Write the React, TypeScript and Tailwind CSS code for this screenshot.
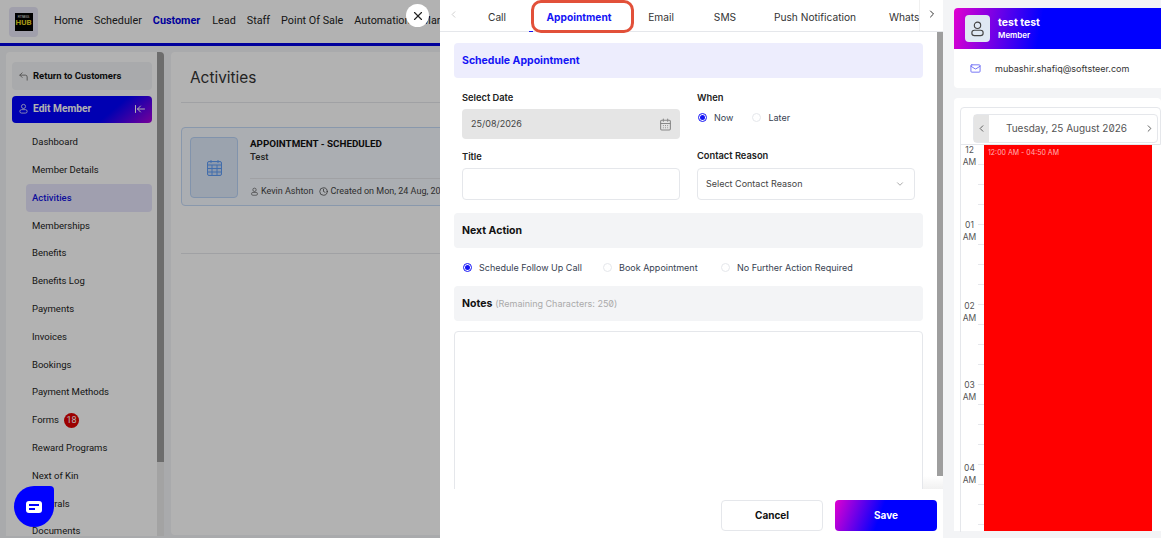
import { ArrowLeftToLine, CalendarDays, ChevronDown, ChevronLeft, ChevronRight, Clock, CornerUpLeft, Mail, X } from "lucide-react";

const navLinks = ["Home", "Scheduler", "Customer", "Lead", "Staff", "Point Of Sale", "Automation", "Marketing"];
const sideLinks = [
  "Dashboard",
  "Member Details",
  "Activities",
  "Memberships",
  "Benefits",
  "Benefits Log",
  "Payments",
  "Invoices",
  "Bookings",
  "Payment Methods",
  "Forms",
  "Reward Programs",
  "Next of Kin",
  "Referrals",
  "Documents",
];
const tabs = [
  { label: "Call", width: "w-[76px]" },
  { label: "Appointment", width: "w-[88px]" },
  { label: "Email", width: "w-[76px]" },
  { label: "SMS", width: "w-[52px]" },
  { label: "Push Notification", width: "w-[128px]" },
];
const hours = [
  { label: "12", height: "h-[75px]" },
  { label: "01", height: "h-[81px]" },
  { label: "02", height: "h-[79px]" },
  { label: "03", height: "h-[83px]" },
  { label: "04", height: "h-[70px]" },
];

function PersonIcon({ size, className }: { size: number; className?: string }) {
  return (
    <svg width={size} height={size} viewBox="0 0 24 24" fill="none" stroke="currentColor" strokeWidth="1.6" className={className}>
      <circle cx="12" cy="7.5" r="4.5" />
      <rect x="4" y="14.5" width="16" height="7.5" rx="3.75" />
    </svg>
  );
}

function GridCalendar() {
  return (
    <svg width="15" height="16" viewBox="0 0 15 16" fill="#c9dcf8" stroke="#5f9cf5" strokeWidth="1">
      <rect x="0.5" y="1.5" width="14" height="14" rx="1.5" />
      <path d="M0.5 5h14M0.5 8.5h14M0.5 12h14M5 5v10.5M10 5v10.5M4 0v3M11 0v3" fill="none" />
    </svg>
  );
}

function Radio({ checked, label }: { checked?: boolean; label: string }) {
  return (
    <div className="flex items-center gap-[7px]">
      <span className={`flex h-[9px] w-[9px] items-center justify-center rounded-full border ${checked ? "border-[#1414f5]" : "border-[#e5e7eb]"}`}>
        {checked && <span className="h-[5px] w-[5px] rounded-full bg-[#1414f5]" />}
      </span>
      <span className="text-[9px] text-[#374151]">{label}</span>
    </div>
  );
}

function LeftPage() {
  return (
    <div className="relative h-full w-[440px] shrink-0 overflow-hidden bg-[#f3f4f6] font-['Roboto',sans-serif]">
      {/* Top nav */}
      <div className="flex h-[46px] items-center border-b-[3px] border-[#0000e0] bg-white pl-[9px]">
        <div className="flex h-[30px] w-[29px] shrink-0 items-center justify-center rounded bg-[#e6e4f5]">
          <div className="flex h-[18px] w-[18px] flex-col items-center justify-center bg-black leading-none">
            <span className="text-[3px] text-white">FITNESS</span>
            <span className="text-[8px] font-bold text-[#e8d820]">HUB</span>
          </div>
        </div>
        <div className="ml-[16px] flex gap-[11px] whitespace-nowrap text-[10.8px] text-[#222]">
          {navLinks.map((link) => (
            <span key={link} className={link === "Customer" ? "mr-[1px] font-bold text-[#0000e0]" : ""}>
              {link}
            </span>
          ))}
        </div>
      </div>

      <div className="flex gap-[7px] pl-[6px] pt-[6px]">
        {/* Sidebar */}
        <div className="flex h-[484px] w-[158px] shrink-0 overflow-hidden rounded-t bg-white">
          <div className="w-[151px] shrink-0 pl-[6px] pr-[5px] pt-[10px]">
            <div className="flex h-[28px] items-center gap-[4px] rounded bg-[#f3f4f6] pl-[6px] text-[9.5px] font-bold text-[#111]">
              <CornerUpLeft size={11} className="text-[#777]" />
              Return to Customers
            </div>
            <div className="mt-[6px] flex h-[27px] items-center rounded-sm bg-[linear-gradient(140deg,#0000ff_68%,#e000d0_110%)] pb-[2px] pl-[6px] pr-[6px] text-[10.2px] font-bold text-white">
              <PersonIcon size={11} className="mr-[4px]" />
              <span className="flex-1">Edit Member</span>
              <ArrowLeftToLine size={12} />
            </div>
            <div className="mt-[5.5px] flex flex-col">
              {sideLinks.map((link) => (
                <div
                  key={link}
                  className={`ml-[14px] flex h-[27.8px] items-center pl-[6px] text-[9.5px] ${
                    link === "Activities" ? "rounded bg-[#e6e4fb] font-medium text-[#1414e0]" : "text-[#222]"
                  }`}
                >
                  {link}
                  {link === "Forms" && (
                    <span className="ml-[5px] flex h-[15px] w-[15px] items-center justify-center rounded-full bg-[#e00000] text-[9px] text-white">18</span>
                  )}
                </div>
              ))}
            </div>
          </div>
          <div className="h-full w-[7px] shrink-0 bg-[#eaeaea]">
            <div className="h-[410px] w-full bg-[#9d9d9d]" />
          </div>
        </div>

        {/* Main card */}
        <div className="h-[483px] flex-1 rounded bg-white pl-[10px]">
          <div className="flex h-[51px] items-center border-b border-[#e5e7eb] pl-[9px] pt-[2px] font-['Inter',sans-serif] text-[15.4px] text-[#333]">Activities</div>
          <div className="mt-[24px] flex h-[79px] w-[300px] items-start rounded-l border border-[#c5daf7] bg-[#f5f9ff] pl-[8px] pt-[9px]">
            <div className="flex h-[61px] w-[48px] shrink-0 items-center justify-center rounded border border-[#b9d3f7] bg-[#dfeafa]">
              <GridCalendar />
            </div>
            <div className="ml-[12px] flex-1">
              <div className="text-[9.8px] font-bold leading-[13px] text-[#111]">APPOINTMENT - SCHEDULED</div>
              <div className="text-[9.5px] font-medium leading-[14px] text-[#333]">Test</div>
              <div className="mt-[14px] flex items-center gap-[1px] whitespace-nowrap border-t border-[#e5e7eb] pt-[6px] text-[9px] text-[#444]">
                <PersonIcon size={9} className="mr-[1px]" />
                Kevin Ashton
                <Clock size={9} className="ml-[5px] mr-[1px]" />
                Created on Mon, 24 Aug, 2026
              </div>
            </div>
          </div>
          <div className="mt-[47px] border-t border-[#e5e7eb]" />
        </div>
      </div>

      {/* Modal backdrop */}
      <div className="absolute inset-0 bg-black/30" />

      {/* Chat launcher */}
      <div className="absolute left-[14px] top-[486px] flex h-[41px] w-[40px] items-center justify-center rounded-[50%_4px_50%_50%] bg-[#0000ff]">
        <div className="flex h-[12px] w-[16px] flex-col justify-center gap-[2px] rounded-[3px] bg-white px-[3px]">
          <span className="h-[2px] w-[10px] bg-[#0000ff]" />
          <span className="h-[2px] w-[6px] bg-[#0000ff]" />
        </div>
      </div>

      <button className="absolute left-[406px] top-[4px] flex h-[23px] w-[23px] items-center justify-center rounded-full bg-white text-[#222]">
        <X size={14} />
      </button>
    </div>
  );
}

function ModalPanel() {
  return (
    <div className="relative flex h-full w-[503px] shrink-0 flex-col overflow-hidden bg-white font-['Inter',sans-serif]">
      {/* Tabs */}
      <div className="flex h-[32px] shrink-0 border-b border-[#e5e7eb] text-[10.2px] text-[#333]">
        <div className="flex w-[19px] shrink-0 items-center justify-end pb-[3px] text-[#ccc]">
          <ChevronLeft size={11} />
        </div>
        <div className="flex min-w-0 flex-1 items-center overflow-hidden whitespace-nowrap pt-[5px]">
          {tabs.map((tab) => (
            <span
              key={tab.label}
              className={`shrink-0 text-center ${tab.width} ${tab.label === "Appointment" ? "font-bold text-[#1414f5]" : ""}`}
            >
              {tab.label}
            </span>
          ))}
          <span className="ml-[10px] shrink-0">WhatsApp</span>
        </div>
        <div className="flex h-full w-[24px] shrink-0 items-center justify-center border-l border-[#f0f0f0] pb-[3px] text-[#333]">
          <ChevronRight size={12} />
        </div>
      </div>

      <div className="flex min-h-0 flex-1">
        <div className="min-w-0 flex-1 pl-[14px] pr-[14px] pt-[11px]">
          <div className="flex h-[35px] items-center rounded-sm bg-[#ededfd] pl-[8px] text-[10.5px] font-bold text-[#1414f5]">Schedule Appointment</div>

          <div className="mt-[14px] flex pl-[8px] text-[9.3px] font-semibold text-[#222]">
            <div className="w-[218px]">
              <div className="leading-[12px]">Select Date</div>
              <div className="mt-[5px] flex h-[30px] items-center justify-between rounded-sm bg-[#e5e5e5] pl-[9px] pr-[8px] text-[9px] font-normal text-[#444]">
                25/08/2026
                <CalendarDays size={13} className="text-[#888]" />
              </div>
              <div className="mt-[12px] leading-[12px]">Title</div>
              <div className="mt-[5px] h-[32px] rounded-sm border border-[#e5e7eb]" />
            </div>
            <div className="ml-[17px] w-[218px]">
              <div className="leading-[12px]">When</div>
              <div className="mt-[7px] flex gap-[19px] pl-[1px] font-normal">
                <Radio checked label="Now" />
                <Radio label="Later" />
              </div>
              <div className="mt-[25px] leading-[12px]">Contact Reason</div>
              <div className="mt-[6px] flex h-[32px] items-center justify-between rounded-sm border border-[#e5e7eb] pl-[8px] pr-[9px] text-[9px] font-normal text-[#444]">
                Select Contact Reason
                <ChevronDown size={10} className="text-[#999]" />
              </div>
            </div>
          </div>

          <div className="mt-[13px] flex h-[35px] items-center rounded-sm bg-[#f3f4f6] pl-[8px] text-[10.5px] font-bold text-[#111]">Next Action</div>
          <div className="mt-[14px] flex h-[11px] items-center pl-[9px]">
            <div className="w-[140px]"><Radio checked label="Schedule Follow Up Call" /></div>
            <div className="w-[118px]"><Radio label="Book Appointment" /></div>
            <Radio label="No Further Action Required" />
          </div>
          <div className="mt-[13px] flex h-[35px] items-center gap-[3px] rounded-sm bg-[#f3f4f6] pl-[8px] text-[10.5px] font-bold text-[#111]">
            Notes
            <span className="text-[9px] font-normal text-[#aaa] [font-feature-settings:'zero']">(Remaining Characters: 250)</span>
          </div>
          <div className="mt-[10px] h-[200px] rounded-sm border border-[#e5e7eb]" />
        </div>
        <div className="w-[6px] shrink-0 bg-[#f1f1f1]">
          <div className="h-[444px] bg-[#9e9e9e]" />
        </div>
      </div>

      {/* Fade at the foot of the scroller */}
      <div className="absolute left-[483px] top-[476px] h-[13px] w-[20px] bg-gradient-to-b from-white to-[#f1f1f1]" />

      {/* Footer sits over the scrolling form */}
      <div className="absolute bottom-0 left-0 flex h-[49px] w-full items-start justify-end gap-[12px] bg-white pr-[6px] pt-[11px] text-[10px] font-bold">
        <button className="h-[31px] w-[102px] rounded border border-[#e5e7eb] text-[#111]">Cancel</button>
        <button className="h-[31px] w-[102px] rounded bg-[linear-gradient(110deg,#e000d0_0%,#0000ff_45%)] text-white">Save</button>
      </div>

      {/* Red highlight round the active tab */}
      <div className="absolute left-[91px] top-0 h-[33px] w-[103px] rounded-[10px] border-[3px] border-[#e25039]" />
      <div className="absolute left-[89px] top-[31px] h-px w-[4px] bg-[#1414f5]" />
    </div>
  );
}

function RightPanel() {
  return (
    <div className="h-full flex-1 overflow-hidden bg-[#f3f4f6] pl-[11px] pt-[8px] font-['Inter',sans-serif]">
      <div className="h-[80px] overflow-hidden rounded-l bg-white">
        <div className="flex h-[41px] items-center bg-[linear-gradient(100deg,#e000d0_0%,#0000ff_42%)] pl-[11px] text-white">
          <div className="flex h-[27px] w-[25px] items-center justify-center rounded bg-[#dfe8f3] text-[#444]">
            <PersonIcon size={17} />
          </div>
          <div className="ml-[8px]">
            <div className="text-[10.5px] font-bold leading-[13px]">test test</div>
            <div className="text-[8px] font-semibold leading-[13px]">Member</div>
          </div>
        </div>
        <div className="flex h-[39px] items-center pl-[16px] text-[9px] text-[#333]">
          <Mail size={11} className="text-[#6a6af5]" />
          <span className="ml-[14px]">mubashir.shafiq@softsteer.com</span>
        </div>
      </div>

      <div className="mt-[10px] h-[433px] rounded-t bg-white pl-[6px] pt-[9px]">
        <div className="flex h-[38px] items-end rounded-t border border-[#e5e7eb] pb-[1px] pl-[12px]">
          <div className="flex h-[29px] w-[185px] items-center rounded-sm border border-[#e5e7eb] text-[10px] text-[#555] [font-feature-settings:'zero']">
            <div className="flex h-full w-[15px] items-center justify-center bg-[#e5e5e5]">
              <ChevronLeft size={11} />
            </div>
            <span className="flex-1 text-center">Tuesday, 25 August 2026</span>
            <ChevronRight size={11} className="mr-[2px]" />
          </div>
        </div>
        <div className="flex">
          <div className="-mt-px w-[18px] shrink-0 border-l border-[#e5e7eb]">
            {hours.map((hour) => (
              <div key={hour.label} className={`${hour.height} text-center text-[8.5px] leading-[12px] text-[#555]`}>
                {hour.label}
                <br />
                AM
              </div>
            ))}
          </div>
          <div className="h-[386px] w-[6px] shrink-0 bg-[repeating-linear-gradient(to_bottom,transparent_0,transparent_19px,#e5e7eb_19px,#e5e7eb_20px)]" />
          <div className="h-[386px] w-[168px] shrink-0 bg-[#ff0000] pl-[4px] pt-[3px] text-[7px] leading-[10px] text-[#ffb3b3]">12:00 AM - 04:50 AM</div>
        </div>
      </div>
    </div>
  );
}

export default function App() {
  return (
    <div className="flex h-[538px] w-[1161px] overflow-hidden">
      <LeftPage />
      <ModalPanel />
      <RightPanel />
    </div>
  );
}
